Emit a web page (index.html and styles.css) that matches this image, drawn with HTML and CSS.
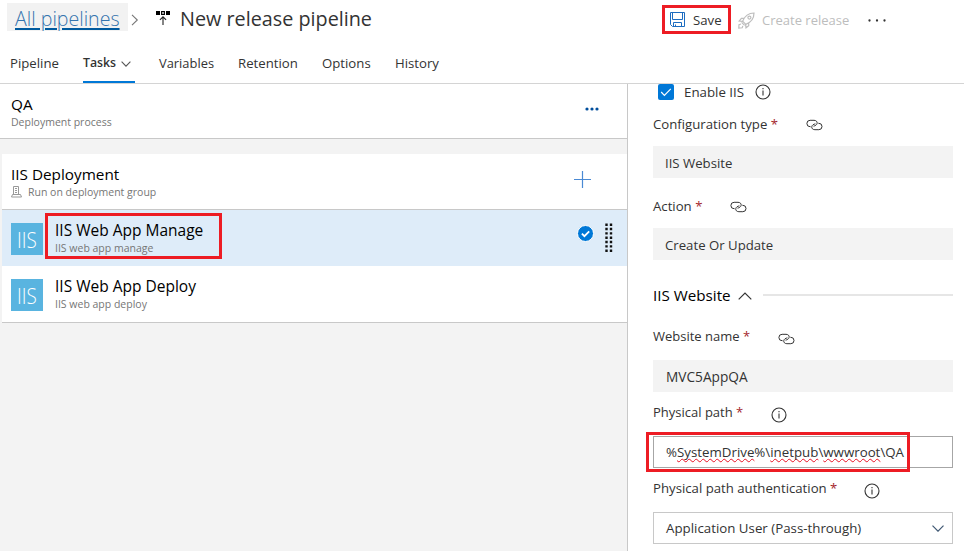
FILE: index.html
```html
<!DOCTYPE html>
<html lang="en">
<head>
<meta charset="utf-8">
<title>New release pipeline</title>
<link rel="stylesheet" href="styles.css">
</head>
<body>
<svg width="0" height="0" class="defs" aria-hidden="true">
  <symbol id="link" viewBox="0 0 17 12">
    <g fill="none" stroke="#333" stroke-width="1">
      <path d="M4.600 7.700h-.5a3.200 3.200 0 0 1 0-6.400h3.900c2.100 0 3.500 1.400 3.100 3.100-.4 1.600-1.800 2.500-3.600 2.700"/>
      <path d="M12.300 4.300h.5a3.200 3.200 0 0 1 0 6.400H8.900c-2.100 0-3.500-1.400-3.100-3.100.4-1.600 1.800-2.500 3.600-2.700"/>
    </g>
  </symbol>
  <symbol id="info" viewBox="0 0 16 16">
    <circle cx="8" cy="8" r="7" fill="none" stroke="#333" stroke-width="1.1"/>
    <path d="M8 6.600v5" stroke="#333" stroke-width="1.1"/>
    <path d="M8 4v1.300" stroke="#333" stroke-width="1.1"/>
  </symbol>
</svg>

<header class="header">
  <div class="title-row">
    <a class="crumb" href="#">All pipelines</a>
    <svg class="crumb-arrow" width="8" height="12" viewBox="0 0 8 12"><path d="M1 .8 6.300 6 1 11.200" fill="none" stroke="#777" stroke-width="1.1"/></svg>
    <svg class="release-icon" width="15" height="15" viewBox="0 0 15 15">
      <path d="M0 0h4v4H0zM10 0h4v4h-4z" fill="#000"/><path d="M5.600.6h2.800v2.800H5.600z" fill="none" stroke="#000" stroke-width="1.1"/>
      <path d="M7 14V6M3.900 8.900 7 5.800l3.100 3.100" fill="none" stroke="#222" stroke-width="1.1"/>
    </svg>
    <h1 class="title">New release pipeline</h1>
    <div class="toolbar">
      <button class="save">
        <svg width="15" height="15" viewBox="0 0 15 15" fill="none" stroke="#1c6cc0"><path d="M.5.5h14v14H2.500l-2-2zM2.500.5v7h10v-7M3.500 14.500v-4h8v4M5.500 14v-1.500"/></svg>
        <span>Save</span>
      </button>
      <div class="create">
        <svg width="17" height="17" viewBox="0 0 17 17" fill="none" stroke="#bdbdbd" stroke-width="1.2"><path d="M4.600 9.200C6.500 4.500 10 1.100 16 1c0 6-3.500 9.500-8.200 11.400zM6.200 6.300H3.400L1.200 9l3.400.4M10.700 10.800v2.800L8 15.800l-.4-3.400M3.600 10.400l3 3M3 12l-2 .6L.8 16l3.400-.2.600-2"/><circle cx="11.400" cy="5.600" r="1.500"/></svg>
        <span>Create release</span>
      </div>
      <svg class="more" width="18" height="3" viewBox="0 0 18 3" fill="#333"><circle cx="1.500" cy="1.500" r="1.150"/><circle cx="9" cy="1.500" r="1.150"/><circle cx="16.500" cy="1.500" r="1.150"/></svg>
    </div>
  </div>
  <nav class="tabs">
    <a class="tab t-pipeline">Pipeline</a>
    <a class="tab active">Tasks <svg width="10" height="6" viewBox="0 0 10 6"><path d="M.6.7 5 5.100 9.400.7" fill="none" stroke="#555" stroke-width="1.100"/></svg></a>
    <a class="tab t-variables">Variables</a>
    <a class="tab t-retention">Retention</a>
    <a class="tab t-options">Options</a>
    <a class="tab">History</a>
  </nav>
</header>

<main class="main">
  <section class="left">
    <div class="stage">
      <div class="lines"><div class="name">QA</div><div class="sub">Deployment process</div></div>
      <svg class="stage-more" width="14" height="4" viewBox="0 0 14 4" fill="#004e9c"><circle cx="2" cy="2" r="1.600"/><circle cx="7" cy="2" r="1.600"/><circle cx="12" cy="2" r="1.600"/></svg>
    </div>
    <div class="card">
      <div class="group">
        <div class="lines">
          <div class="name">IIS Deployment</div>
          <div class="sub with-icon"><svg width="11" height="12" viewBox="0 0 11 12" fill="none" stroke="#999"><path d="M2.500 8V.5h5V8M4 2.500h2M4 4.500h2M4 6.500h2M1.500 8.500h8l1 2.500H.5z"/></svg>Run on deployment group</div>
        </div>
        <svg class="plus" width="17" height="17" viewBox="0 0 17 17"><path d="M8.500 0v17M0 8.500h17" stroke="#4a8ad4" stroke-width="1.200"/></svg>
      </div>
      <div class="task selected">
        <div class="tile"><span>IIS</span></div>
        <div class="lines"><div class="name">IIS Web App Manage</div><div class="sub">IIS web app manage</div></div>
        <svg class="check" width="17" height="17" viewBox="0 0 17 17"><circle cx="8.500" cy="8.500" r="8" fill="#0078d7" stroke="#fff"/><path d="m4.900 8.700 2.500 2.500 4.800-4.900" fill="none" stroke="#fff" stroke-width="1.800"/></svg>
        <svg class="grip" width="8" height="29" viewBox="0 0 8 29"><path d="M1.500.5v29M6 .5v29" stroke="#111" stroke-width="2.400" stroke-dasharray="2.400 1.930"/></svg>
        <div class="mark task-mark"></div>
      </div>
      <div class="task">
        <div class="tile"><span>IIS</span></div>
        <div class="lines"><div class="name">IIS Web App Deploy</div><div class="sub">IIS web app deploy</div></div>
      </div>
    </div>
  </section>

  <section class="right">
    <div class="enable">
      <svg width="16" height="16" viewBox="0 0 16 16"><rect width="16" height="16" rx="2" fill="#0078d7"/><path d="m3.200 8 3.200 3.300 6.400-6.500" fill="none" stroke="#fff" stroke-width="1.200"/></svg>
      <span>Enable IIS</span>
      <svg width="16" height="16"><use href="#info"/></svg>
    </div>
    <div class="label config"><span>Configuration type <i>*</i></span><svg width="17" height="12"><use href="#link"/></svg></div>
    <div class="input">IIS Website</div>
    <div class="label action"><span>Action <i>*</i></span><svg width="17" height="12"><use href="#link"/></svg></div>
    <div class="input">Create Or Update</div>
    <div class="section"><span>IIS Website</span><svg width="14" height="8" viewBox="0 0 14 8"><path d="M.7 7.300 7 1l6.300 6.300" fill="none" stroke="#333" stroke-width="1.200"/></svg><div class="rule"></div></div>
    <div class="label site"><span>Website name <i>*</i></span><svg width="17" height="12"><use href="#link"/></svg></div>
    <div class="input indent mvc">MVC5AppQA</div>
    <div class="label path"><span>Physical path <i>*</i></span><svg width="16" height="16"><use href="#info"/></svg></div>
    <div class="input indent edit"><div>%<u>SystemDrive</u>%\<u>inetpub</u>\<u>wwwroot</u>\QA</div><div class="mark path-mark"></div></div>
    <div class="label auth"><span>Physical path authentication <i>*</i></span><svg width="16" height="16"><use href="#info"/></svg></div>
    <div class="input indent select"><span>Application User (Pass-through)</span><svg width="12" height="7" viewBox="0 0 12 7"><path d="M.5.7 6 6.200 11.500.7" fill="none" stroke="#3f5873" stroke-width="1.200"/></svg></div>
  </section>
</main>
</body>
</html>
```
FILE: styles.css
```css
* { box-sizing: border-box; }
body {
  margin: 0;
  width: 964px;
  height: 551px;
  overflow: hidden;
  background: #fff;
  color: #333;
  font: 13.2px/18px "Open Sans", "Noto Sans", sans-serif;
  white-space: nowrap;
}
svg { display: block; flex: none; }
.defs { position: absolute; }

.header { height: 84px; border-bottom: 1px solid #d4d4d4; }
.title-row { display: flex; align-items: center; height: 37px; padding-left: 7px; }
.crumb {
  width: 121px;
  height: 28px;
  margin-top: -3px;
  padding-left: 8px;
  background: #f2f2f2;
  color: #3574ae;
  font-size: 19.600px;
  font-weight: 300;
  line-height: 31px;
  text-decoration: underline #005a9e 2px;
  text-underline-offset: 2px;
  text-decoration-skip-ink: auto;
}
.crumb-arrow { margin: 2px 0 0 3px; }
.release-icon { margin: -1px 0 0 17px; }
.title { margin: 0 0 0 9px; width: 482px; font-size: 19.800px; font-weight: 400; line-height: 36px; }
.toolbar { display: flex; align-items: center; height: 37px; padding-top: 3px; }
.save {
  display: flex;
  align-items: center;
  gap: 8px;
  width: 69px;
  height: 29px;
  margin: -1px 7px 0 0;
  padding: 0 0 0 5px;
  border: 3px solid #ed1c24;
  background: #fff;
  color: #333;
  font: inherit;
}
.create { display: flex; align-items: center; gap: 7px; color: #bdbdbd; font-size: 13px; }
.more { margin-left: 19px; }

.tabs { display: flex; height: 46px; padding-left: 10px; line-height: 52px; }
.t-pipeline { width: 73px; }
.active {
  display: flex;
  align-items: center;
  gap: 5px;
  width: 52px;
  margin-right: 24px;
  padding-top: 8px;
  border-bottom: 2px solid #0078d7;
  font-size: 12.300px;
  font-weight: 600;
}
.active svg { margin-top: 1px; }
.t-variables { width: 79px; font-size: 12.900px; }
.t-retention { width: 84px; }
.t-options { width: 73px; }

.main { display: flex; height: 467px; }
.left { width: 628px; border-right: 1px solid #c8c8c8; background: #f3f3f3; }
.stage { display: flex; height: 55px; padding: 11px 28px 0 11px; border-bottom: 1px solid #c8c8c8; background: #fff; }
.lines { flex: 1; }
.name { height: 18px; color: #000; font-size: 15.300px; line-height: 18px; }
.task .name { font-size: 15.500px; }
.sub { height: 18px; color: #767676; font-size: 10.500px; line-height: 18px; }
.stage-more { margin-top: 12px; }
.card { margin: 15px 0 0 2px; border-bottom: 1px solid #c8c8c8; background: #fff; }
.group { display: flex; height: 56px; padding: 11px 36px 0 9px; border-bottom: 1px solid #c8c8c8; }
.with-icon { display: flex; align-items: center; gap: 6px; }
.plus { margin-top: 6px; }
.task { position: relative; display: flex; height: 56px; padding: 11px 14px 0 9px; }
.selected { background: #deecf9; }
.tile {
  width: 32px;
  height: 32px;
  margin: 2px 12px 0 0;
  background: #59b4e0;
  color: #fff;
  font-size: 22.500px;
  font-weight: 300;
  line-height: 33px;
  text-align: center;
}
.tile span { display: inline-block; margin: 0 -4px; transform: scaleX(.84); }
.check { margin: 4px 11px 0 0; }
.grip { margin-top: 2px; }
.mark { position: absolute; border: 3px solid #ed1c24; }
.task-mark { left: 43px; top: 3px; width: 177px; height: 46px; }

.right { width: 336px; padding: 0 11px 0 25px; }
.enable { display: flex; align-items: center; height: 16px; padding-left: 5px; }
.enable span { width: 61px; margin: 0 10px; font-size: 13.300px; }
.label { display: flex; align-items: center; height: 24px; }
.label i { color: #a4262c; font-style: normal; }
.label svg { margin-left: auto; }
.config { width: 170px; margin: 12px 0 10px; }
.action { width: 94px; margin: 16px 0 10px; }
.site { width: 142px; margin: 17px 0 12px; font-size: 13px; }
.path { width: 134px; margin: 8px 0 12px; font-size: 13px; }
.auth { width: 227px; margin: 8px 0 12px; }
.site svg, .path svg, .auth svg { margin-top: 5px; }
.config svg, .action svg { margin-top: 2px; }
.input { display: flex; height: 32px; padding-left: 12px; background: #f3f3f3; line-height: 34px; }
.indent { padding-left: 13px; }
.mvc { font-size: 13.700px; line-height: 33px; }
.edit, .select { background: #fff; line-height: 32px; font-size: 13.300px; }
.edit { position: relative; padding-left: 12px; border: 1px solid #a6a6a6; line-height: 31px; }
.edit u { text-decoration: underline wavy #e81123 1px; text-underline-offset: 1px; text-decoration-skip-ink: none; }
.path-mark { left: -8px; top: -5px; width: 264px; height: 40px; }
.select { align-items: center; justify-content: space-between; padding: 0 8px 0 12px; border: 1px solid #c8c8c8; }
.section { display: flex; align-items: center; height: 24px; margin-top: 23px; color: #000; font-size: 15.200px; }
.section svg { margin: 2px 11px 0 7px; }
.rule { flex: 1; height: 2px; background: #e6e6e6; }
```
